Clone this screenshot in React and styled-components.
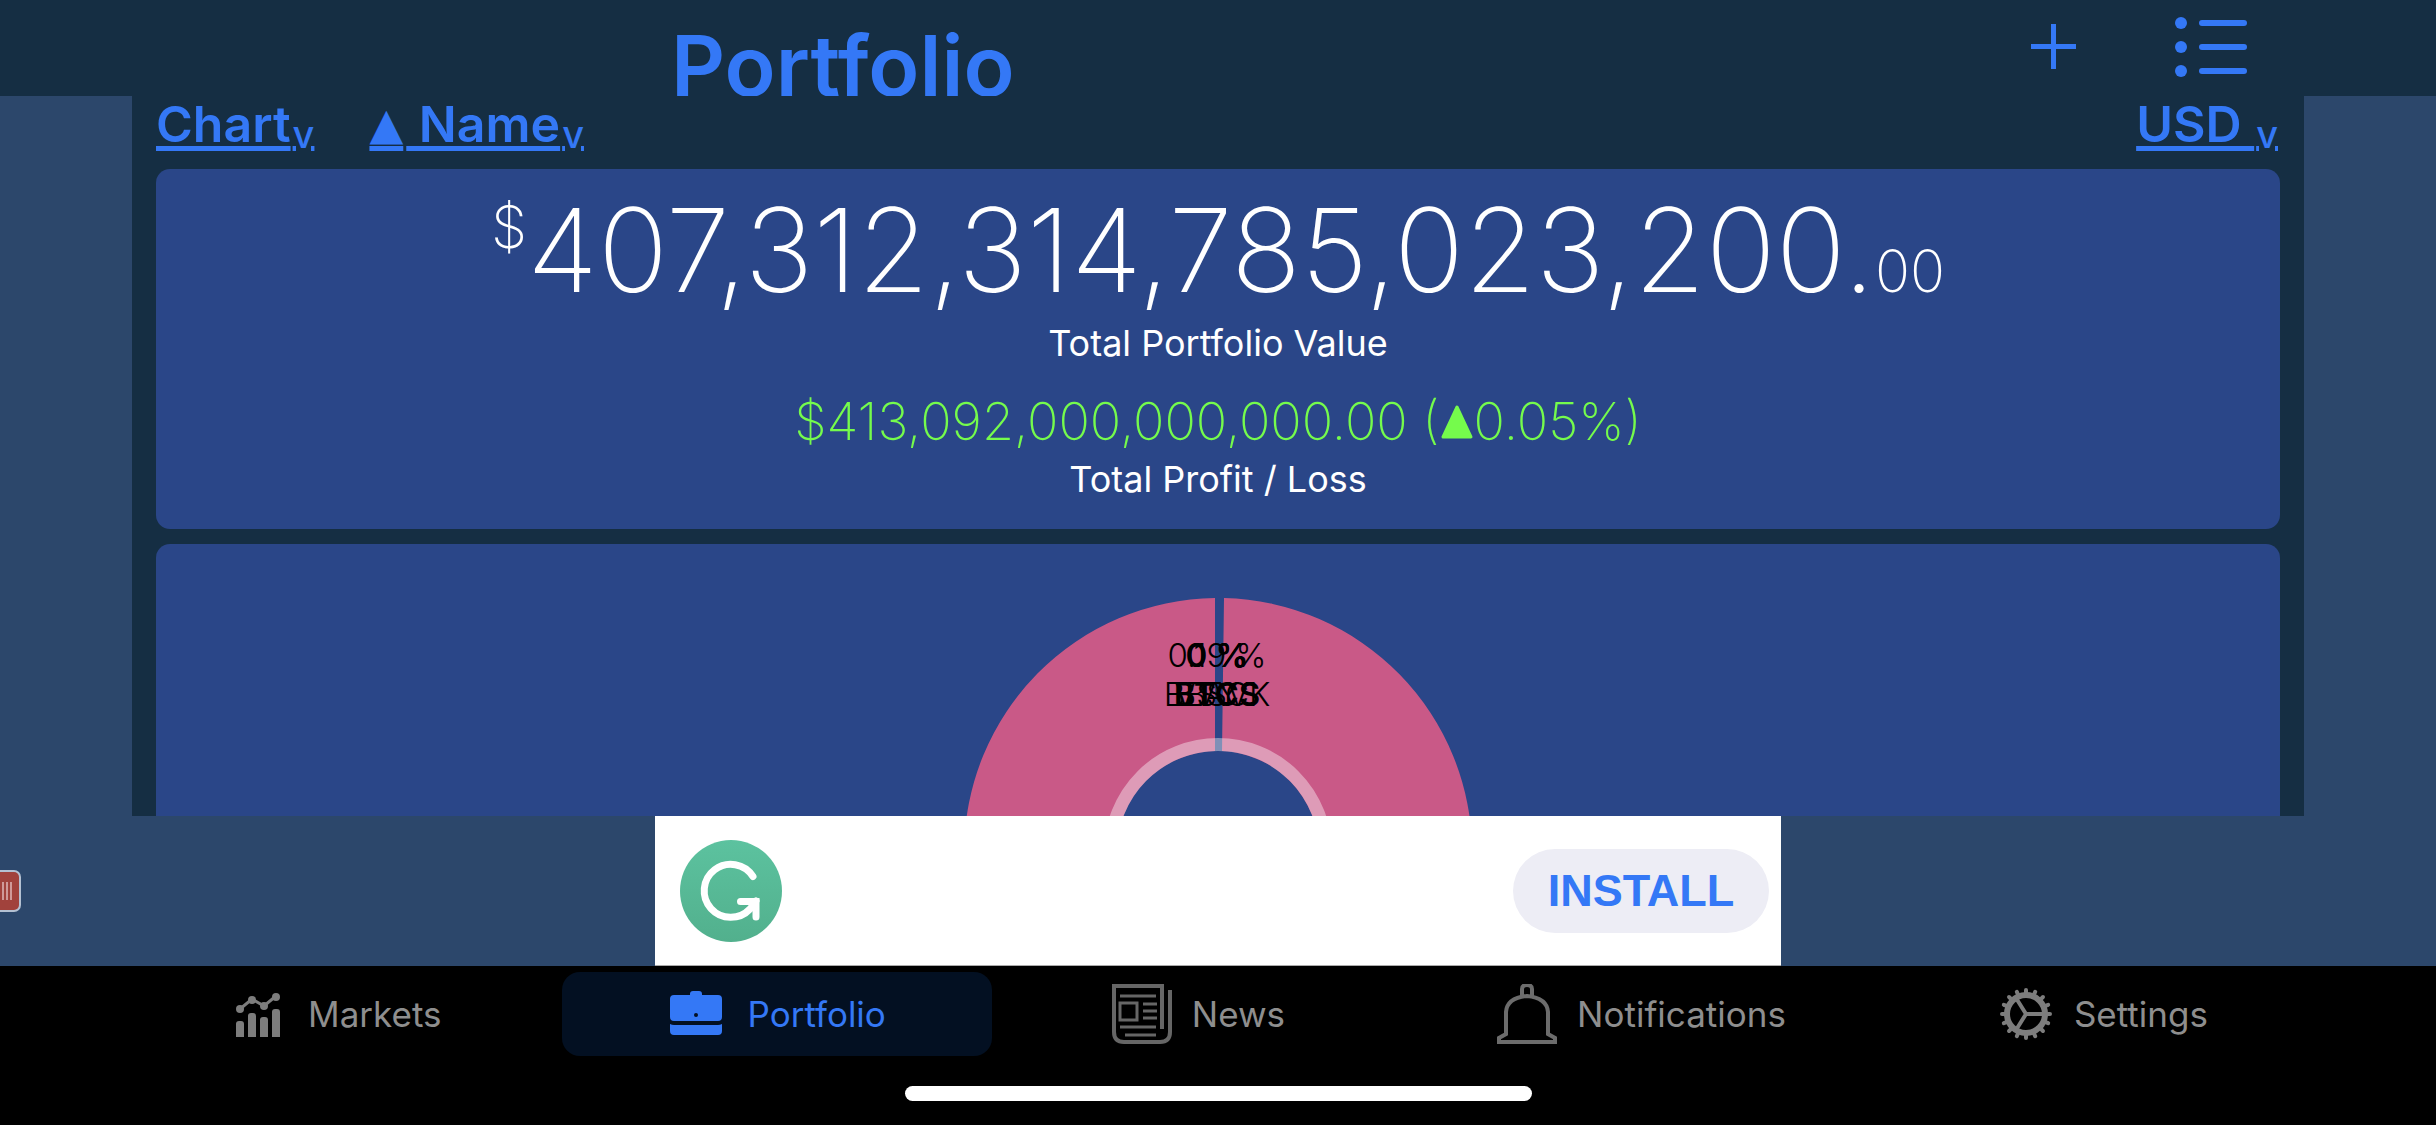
import React from "react";
import styled, { createGlobalStyle } from "styled-components";

const blue = "#3478f6";
const navy = "#152e43";
const slate = "#2c476b";
const panel = "#2a4688";

const GlobalStyle = createGlobalStyle`
  *, *::before, *::after { box-sizing: border-box; }
  body {
    margin: 0;
    background: #000;
    font-family: Inter, "Liberation Sans", sans-serif;
  }
  button { font-family: inherit; border: 0; padding: 0; background: none; cursor: pointer; }
  h1, p { margin: 0; font-weight: inherit; }
  svg { display: block; flex: none; }
`;

const Screen = styled.div`
  display: flex;
  flex-direction: column;
  min-height: 100vh;
  background: ${slate};
`;

const Header = styled.header`
  display: flex;
  justify-content: space-between;
  height: 96px;
  padding: 0 188px 0 671px;
  overflow: hidden;
  background: ${navy};
`;

const Title = styled.h1`
  padding-top: 12px;
  color: ${blue};
  font-size: 84px;
  font-weight: 600;
  line-height: 108px;
`;

const HeaderActions = styled.div`
  display: flex;
  align-items: flex-start;
  gap: 98px;
`;

const IconButton = styled.button`
  padding-top: ${(p) => p.$top}px;
`;

const Content = styled.main`
  display: flex;
  flex: 1;
  flex-direction: column;
  min-height: 0;
  margin: 0 132px;
  padding: 0 24px;
  overflow: hidden;
  background: ${navy};
`;

const Filters = styled.div`
  display: flex;
  align-items: flex-start;
  gap: 50px;
  height: 73px;
`;

const FilterButton = styled.button`
  margin-left: ${(p) => (p.$end ? "auto" : "0")};
  color: ${blue};
  font-size: 50px;
  font-weight: 600;
  line-height: 56px;
  text-decoration: underline;
  text-decoration-thickness: 5px;
  text-underline-offset: 4px;
  white-space: pre;
`;

const Caret = styled.span`
  padding: 0 2px;
  font-size: 38px;
  font-weight: 500;
  line-height: 1;
  vertical-align: -6px;
`;

const SortMark = styled.span`
  padding: 0 3px;
  font-family: "DejaVu Sans", sans-serif;
  font-size: 44px;
  font-weight: 400;
  line-height: 1;
  vertical-align: 3px;
`;

const SummaryCard = styled.section`
  display: flex;
  flex-direction: column;
  align-items: center;
  height: 360px;
  border-radius: 14px;
  background: ${panel};
  color: #fff;
`;

const Total = styled.p`
  display: flex;
  align-items: baseline;
  padding-top: 10px;
  font-size: 116px;
  font-weight: 200;
  line-height: 142px;
`;

const Currency = styled.span`
  align-self: flex-start;
  font-size: 58px;
  line-height: 96px;
`;

const Cents = styled.span`
  font-size: 58px;
  line-height: 1;
`;

const Label = styled.p`
  font-size: 36px;
  line-height: 44px;
`;

const Profit = styled.p`
  display: flex;
  align-items: center;
  margin-top: 22px;
  color: #75fb4c;
  font-size: 52px;
  font-weight: 200;
  line-height: 70px;
  white-space: pre;
`;

const ChartCard = styled.section`
  display: flex;
  flex: 1;
  justify-content: center;
  min-height: 0;
  margin-top: 15px;
  overflow: hidden;
  border-radius: 14px 14px 0 0;
  background: ${panel};
`;

const ChartFrame = styled.div`
  height: 272px;
  padding-top: 54px;
  overflow: hidden;
`;

const AdRow = styled.aside`
  position: relative;
  display: flex;
  justify-content: center;
  height: 150px;
`;

const Ad = styled.div`
  display: flex;
  align-items: center;
  justify-content: space-between;
  width: 1126px;
  padding: 0 12px 0 25px;
  background: #fff;
  border-bottom: 1px solid #aaa;
`;

const Install = styled.button`
  width: 256px;
  height: 84px;
  border-radius: 42px;
  background: #ededf5;
  color: ${blue};
  font-family: "Liberation Sans", sans-serif;
  font-size: 45px;
  font-weight: 700;
`;

const SideHandle = styled.button`
  position: absolute;
  top: 54px;
  left: 0;
  display: flex;
  align-items: center;
  gap: 2px;
  width: 21px;
  height: 42px;
  padding-left: 2px;
  border: solid #b4c1d2;
  border-width: 2px 2px 2px 0;
  border-radius: 0 7px 7px 0;
  background: #a1423c;
`;

const Grip = styled.span`
  width: 2px;
  height: 18px;
  background: #cf9a99;
`;

const TabBar = styled.nav`
  display: flex;
  justify-content: center;
  height: 90px;
  padding-top: 6px;
  background: #000;
`;

const Tab = styled.button`
  display: flex;
  flex: none;
  align-items: center;
  justify-content: center;
  gap: 20px;
  height: 84px;
  margin: 0 ${(p) => (p.$active ? "14px" : "0")};
  padding: 0 106px;
  border-radius: 18px;
  background: ${(p) => (p.$active ? "#031022" : "transparent")};
  color: ${(p) => (p.$active ? blue : "#8e8e8e")};
  font-size: 35px;
`;

const IndicatorRow = styled.footer`
  display: flex;
  justify-content: center;
  height: 69px;
  padding-top: 30px;
  background: #000;
`;

const Indicator = styled.div`
  width: 627px;
  height: 15px;
  border-radius: 8px;
  background: #fff;
`;

const PlusIcon = () => (
  <svg width="46" height="46" viewBox="0 0 46 46" stroke={blue} strokeWidth="5">
    <path d="M22.500 0V45M0 22.500H45" />
  </svg>
);

const ListIcon = () => (
  <svg width="73" height="60" viewBox="0 0 73 60" fill={blue}>
    {[6, 30, 54].map((y) => (
      <g key={y}>
        <circle cx="6" cy={y} r="6" />
        <rect x="24" y={y - 3} width="48" height="6" rx="3" />
      </g>
    ))}
  </svg>
);

const GainIcon = () => (
  <svg width="34" height="34" viewBox="0 0 34 34" fill="currentColor" stroke="currentColor" strokeWidth="3" strokeLinejoin="round">
    <path d="M17 2L31 32H3Z" />
  </svg>
);

const MarketsIcon = () => (
  <svg width="60" height="60" viewBox="0 0 60 60" fill="#7d7d7d">
    <path d="M8 53V40q0-3 3-3h2q3 0 3 3V53ZM20 53V32q0-3 3-3h2q3 0 3 3V53ZM32 53V36q0-3 3-3h2q3 0 3 3V53ZM44 53V28q0-3 3-3h2q3 0 3 3V53Z" />
    <path d="M12 25L24 15L36 22L48 12" fill="none" stroke="#7d7d7d" strokeWidth="3" />
    <circle cx="12" cy="25" r="4" />
    <circle cx="24" cy="16" r="4" />
    <circle cx="36" cy="22" r="4" />
    <circle cx="48" cy="13" r="4" />
  </svg>
);

const BriefcaseIcon = () => (
  <svg width="60" height="60" viewBox="0 0 60 60">
    <path fill={blue} d="M6 11H22V10q0-3 3-3h6q3 0 3 3v1H50q4 0 4 4V33q0 4-4 4H6q-4 0-4-4V15q0-4 4-4Z" />
    <path fill={blue} d="M2 40q2 1 4 1H50q2 0 4-1v7q0 4-4 4H6q-4 0-4-4Z" />
    <circle cx="28" cy="31" r="2" fill="#031022" />
  </svg>
);

const NewsIcon = () => (
  <svg width="60" height="60" viewBox="0 0 60 60" fill="none" stroke="#666" strokeWidth="3">
    <path d="M0 2H50V45" strokeWidth="4" />
    <path d="M58 6V48q0 10-10 10H12Q2 58 2 48V2" strokeWidth="4" />
    <path d="M8 12H44M31 20H45M31 27H45M31 34H45M8 43H44M13 51H44" />
    <rect x="8" y="19" width="17" height="17" />
  </svg>
);

const BellIcon = () => (
  <svg width="60" height="60" viewBox="0 0 60 60" fill="none" stroke="#6c6c6c" strokeWidth="4">
    <path d="M25 12V5q0-4 5-4t5 4v7" />
    <path d="M2 58V54L9 50V28Q10 14 30 12Q50 14 51 28V50L58 54V58" />
    <path d="M0 58H60" />
  </svg>
);

const GearIcon = () => (
  <svg width="56" height="60" viewBox="2 0 56 60" fill="none" stroke="#7d7d7d">
    <circle cx="30" cy="30" r="19" strokeWidth="6" />
    {Array.from({ length: 16 }, (_, i) => (
      <path key={i} d="M30 9V6" strokeWidth="4" strokeLinecap="round" transform={`rotate(${i * 22.5} 30 30)`} />
    ))}
    <path d="M30 30H49M30 30L20 14M30 30L20 46" strokeWidth="4" />
  </svg>
);

const AdLogo = () => (
  <svg width="102" height="102" viewBox="0 0 102 102">
    <defs>
      <linearGradient id="mint" x1="0" y1="0" x2="0" y2="1">
        <stop offset="0" stopColor="#5cc29f" />
        <stop offset="1" stopColor="#52b08d" />
      </linearGradient>
    </defs>
    <circle cx="51" cy="51" r="51" fill="url(#mint)" />
    <path d="M73 36.500A26.500 26.500 0 1 0 70 69L76 61" fill="none" stroke="#fff" strokeWidth="7" strokeLinecap="round" />
    <path d="M60.500 61.500H76V77" fill="none" stroke="#fff" strokeWidth="7" strokeLinecap="round" />
  </svg>
);

const sliceLabels = [
  ["0.19 %", "BLACK", 300],
  ["0 %", "VSYS", 300],
  ["0 %", "BTCS", 600],
  ["0 %", "BSV", 300],
];

const Donut = () => (
  <svg width="508" height="508" viewBox="0 0 508 508">
    <path fill="#c95987" d="M251 0.020A254 254 0 0 0 251 507.980V354.960A101 101 0 0 1 251 153.040Z" />
    <path fill="#c95987" d="M260 0.070A254 254 0 0 1 260 507.930L258 354.920A101 101 0 0 0 258 153.080Z" />
    <circle cx="254" cy="254" r="107.500" fill="none" stroke="#fff" strokeOpacity="0.4" strokeWidth="13" />
    <g fontFamily="Inter, sans-serif" fontSize="33" textAnchor="middle">
      {sliceLabels.map(([share, name, weight]) => (
        <g key={name} fontWeight={weight}>
          <text x="253" y="69">{share}</text>
          <text x="253" y="108">{name}</text>
        </g>
      ))}
    </g>
  </svg>
);

const tabs = [
  ["Markets", MarketsIcon],
  ["Portfolio", BriefcaseIcon],
  ["News", NewsIcon],
  ["Notifications", BellIcon],
  ["Settings", GearIcon],
];

export default function App() {
  return (
    <Screen>
      <GlobalStyle />
      <Header>
        <Title>Portfolio</Title>
        <HeaderActions>
          <IconButton $top={24} aria-label="Add"><PlusIcon /></IconButton>
          <IconButton $top={17} aria-label="List"><ListIcon /></IconButton>
        </HeaderActions>
      </Header>
      <Content>
        <Filters>
          <FilterButton>Chart<Caret>v</Caret></FilterButton>
          <FilterButton><SortMark>▲</SortMark> Name<Caret>v</Caret></FilterButton>
          <FilterButton $end>USD <Caret>v</Caret></FilterButton>
        </Filters>
        <SummaryCard>
          <Total><Currency>$</Currency>407,312,314,785,023,200.<Cents>00</Cents></Total>
          <Label>Total Portfolio Value</Label>
          <Profit>$413,092,000,000,000.00 (<GainIcon />0.05%)</Profit>
          <Label>Total Profit / Loss</Label>
        </SummaryCard>
        <ChartCard>
          <ChartFrame><Donut /></ChartFrame>
        </ChartCard>
      </Content>
      <AdRow>
        <Ad>
          <AdLogo />
          <Install>INSTALL</Install>
        </Ad>
        <SideHandle aria-label="Open side panel"><Grip /><Grip /><Grip /></SideHandle>
      </AdRow>
      <TabBar>
        {tabs.map(([name, Icon]) => (
          <Tab key={name} $active={name === "Portfolio"}><Icon />{name}</Tab>
        ))}
      </TabBar>
      <IndicatorRow><Indicator /></IndicatorRow>
    </Screen>
  );
}
